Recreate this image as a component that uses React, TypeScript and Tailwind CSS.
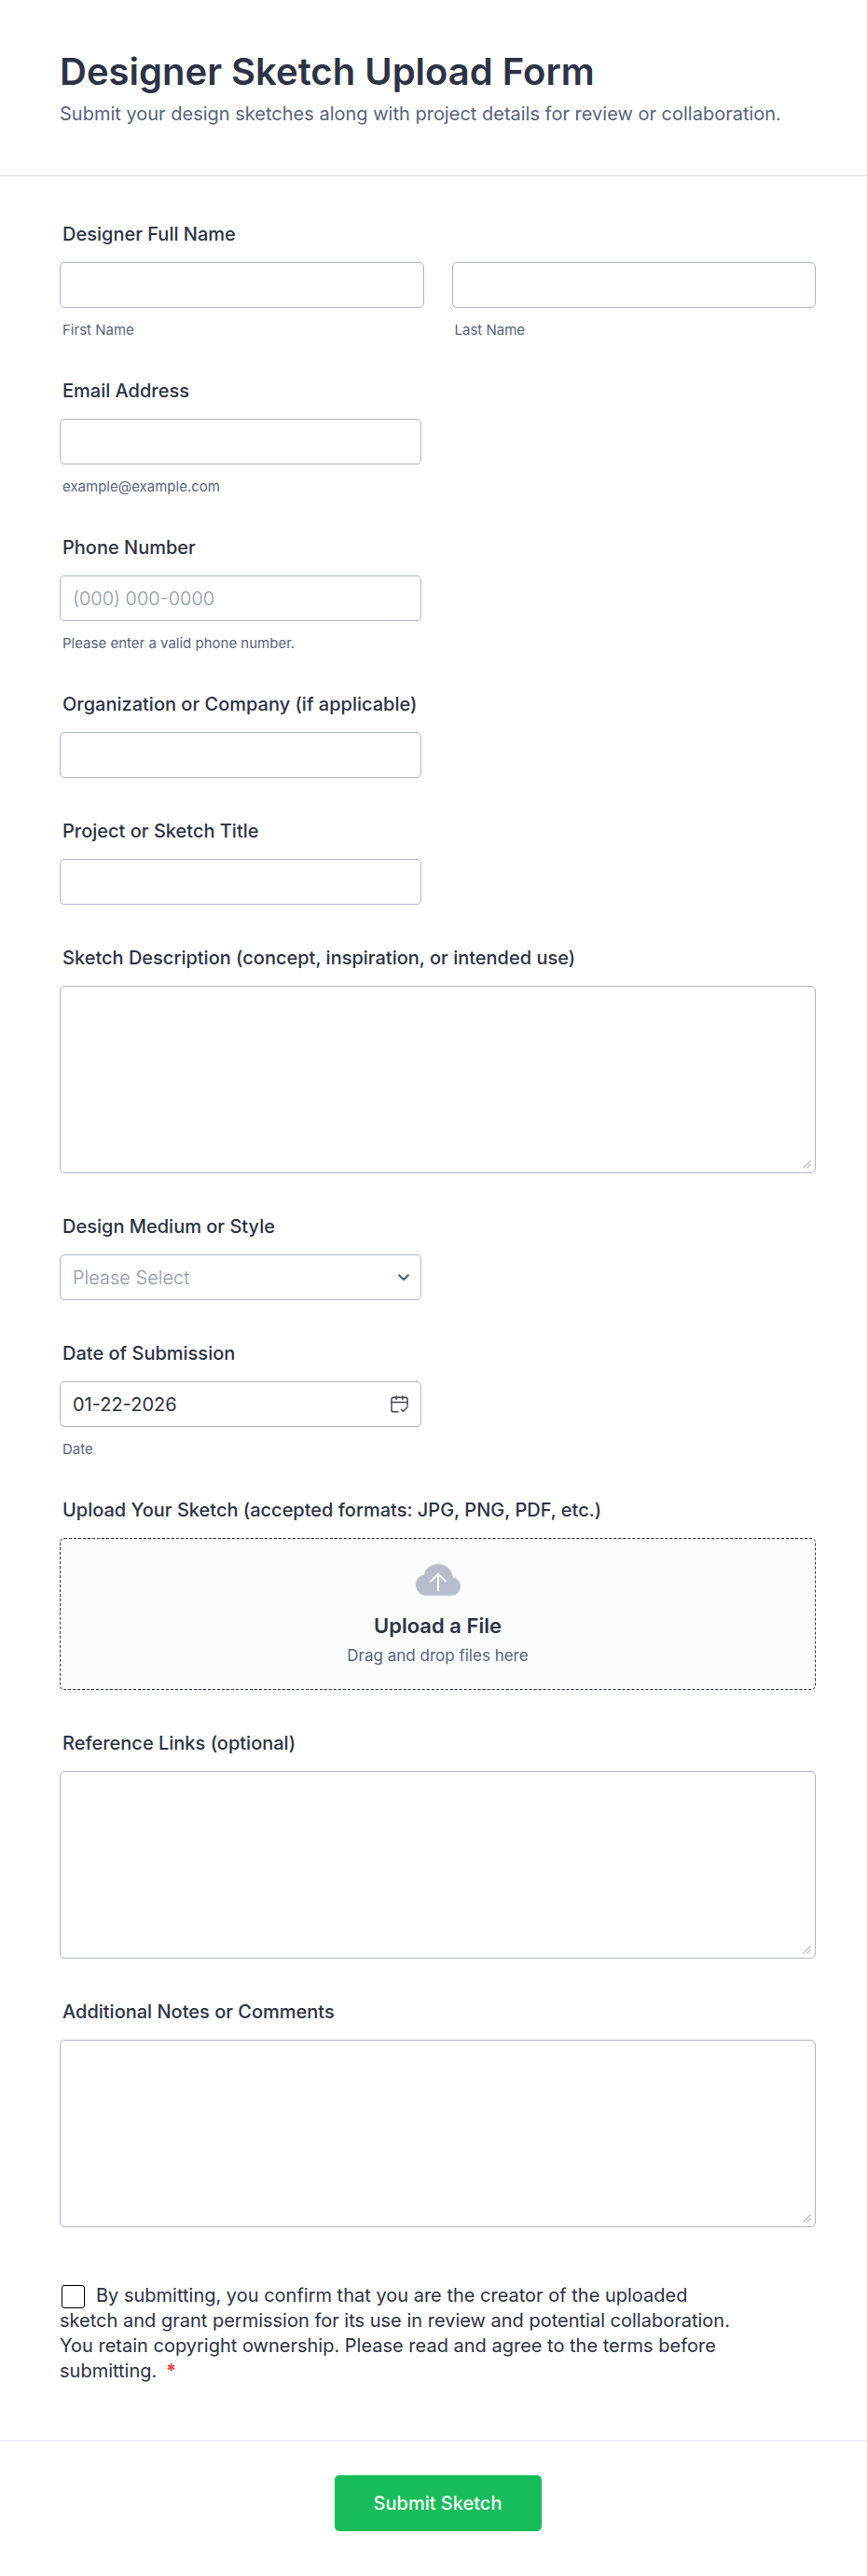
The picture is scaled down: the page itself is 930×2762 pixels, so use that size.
import type { ReactNode } from 'react';

const fieldClass = 'block h-[49px] rounded-[5px] border border-[#b0b6c8] bg-white px-[13px] text-xl text-[#2c3345] outline-none focus:border-[#2e69ff] placeholder:font-light placeholder:text-[#8d9aa8]';
const halfClass = 'w-[388px] max-w-full';

interface FieldProps {
    id: string;
    label: string;
    hint?: string;
    children: ReactNode;
}

function Field({ id, label, hint, children }: FieldProps) {
    return (
        <div>
            <label htmlFor={id} className="mb-[17px] block px-[3px] text-xl leading-[25px] font-medium">
                {label}
            </label>
            {children}
            {hint && <Hint>{hint}</Hint>}
        </div>
    );
}

function Hint({ children }: { children: ReactNode }) {
    return <p className="mt-[15px] px-[3px] text-[15px] leading-[17px] text-[#57647e]">{children}</p>;
}

function LongText({ id }: { id: string }) {
    return (
        <div className="relative">
            <textarea
                id={id}
                className="block h-[201px] w-full resize-none rounded-[5px] border border-[#b0b6c8] bg-white px-[13px] py-3 text-xl outline-none focus:border-[#2e69ff]"
            />
            {/* Resize grip */}
            <svg className="pointer-events-none absolute right-[5px] bottom-[5px] h-[9px] w-[9px]" viewBox="0 0 9 9" stroke="#b8bdcc" strokeWidth="1.2">
                <path d="M0.5 8.5 8.5 0.5M4.5 8.5 8.5 4.5" />
            </svg>
        </div>
    );
}

function CalendarIcon() {
    return (
        <svg viewBox="0 0 20 20" className="h-[19px] w-[19px]" fill="none" stroke="#4f4458" strokeWidth="1.6" strokeLinecap="round" strokeLinejoin="round">
            <path d="M8.5 18.7H3a2 2 0 0 1-2-2V4.500a2 2 0 0 1 2-2h14a2 2 0 0 1 2 2v7M1 7.800h18M6.500 1v3.600M13.500 1v3.600M12 16l2.200 2.200 4.800-4.700" />
        </svg>
    );
}

function CloudUploadIcon() {
    return (
        <svg viewBox="0 0 48 34" className="h-[34px] w-12">
            <path
                fill="#b8bdcc"
                d="M9 11.6C9.9 5 16 0 24 0s15 6 15.600 14.200A10 10 0 0 1 48 24c0 5.500-4.500 9.800-10 9.800H11C5 33.800 0 29 0 22.600 0 16.500 4 12.200 9 11.600Z"
            />
            <path d="M24 28.500V10.500M16 18.500 24 10.500l8 8" fill="none" stroke="#fff" strokeWidth="1.800" strokeLinecap="round" strokeLinejoin="round" />
        </svg>
    );
}

export default function App() {
    return (
        <form className="bg-white font-['Inter',sans-serif] text-[#2c3345]" onSubmit={(e) => e.preventDefault()}>
            <header className="border-b border-[#d7d8e1] px-16 pt-[52px] pb-[53px]">
                <h1 className="text-[40px] leading-[50px] font-semibold">Designer Sketch Upload Form</h1>
                <p className="mt-[7px] text-xl leading-[26px] text-[#57647e]">
                    Submit your design sketches along with project details for review or collaboration.
                </p>
            </header>

            <div className="flex flex-col gap-[45px] pt-[50px] pr-[55px] pb-[60px] pl-16">
                <fieldset>
                    <legend className="mb-[17px] px-[3px] text-xl leading-[25px] font-medium">Designer Full Name</legend>
                    <div className="grid grid-cols-2 gap-[30px]">
                        <label>
                            <input type="text" name="first" className={`${fieldClass} w-full`} />
                            <Hint>First Name</Hint>
                        </label>
                        <label>
                            <input type="text" name="last" className={`${fieldClass} w-full`} />
                            <Hint>Last Name</Hint>
                        </label>
                    </div>
                </fieldset>

                <Field id="email" label="Email Address" hint="example@example.com">
                    <input id="email" type="email" className={`${fieldClass} ${halfClass}`} />
                </Field>

                <Field id="phone" label="Phone Number" hint="Please enter a valid phone number.">
                    <input id="phone" type="tel" placeholder="(000) 000-0000" className={`${fieldClass} ${halfClass}`} />
                </Field>

                <Field id="company" label="Organization or Company (if applicable)">
                    <input id="company" type="text" className={`${fieldClass} ${halfClass}`} />
                </Field>

                <Field id="title" label="Project or Sketch Title">
                    <input id="title" type="text" className={`${fieldClass} ${halfClass}`} />
                </Field>

                <Field id="description" label="Sketch Description (concept, inspiration, or intended use)">
                    <LongText id="description" />
                </Field>

                <Field id="medium" label="Design Medium or Style">
                    <div className={`relative ${halfClass}`}>
                        <select
                            id="medium"
                            defaultValue=""
                            className="block h-[49px] w-full appearance-none rounded-[5px] border border-[#b0b6c8] bg-white px-[13px] text-xl font-light text-[#8d9aa8] outline-none focus:border-[#2e69ff]"
                        >
                            <option value="">Please Select</option>
                            <option>Pencil</option>
                            <option>Ink</option>
                            <option>Watercolor</option>
                            <option>Digital</option>
                        </select>
                        <svg viewBox="0 0 12 8" className="pointer-events-none absolute top-[21px] right-[13px] h-2 w-3" fill="none" stroke="#57647e" strokeWidth="2.4" strokeLinecap="round" strokeLinejoin="round">
                            <path d="M1.300 1.500 6 6l4.700-4.500" />
                        </svg>
                    </div>
                </Field>

                <Field id="date" label="Date of Submission" hint="Date">
                    <div className={`relative ${halfClass}`}>
                        <input id="date" type="text" defaultValue="01-22-2026" className={`${fieldClass} w-full`} />
                        <button type="button" aria-label="Choose date" className="absolute top-[15px] right-3.5">
                            <CalendarIcon />
                        </button>
                    </div>
                </Field>

                <Field id="sketch" label="Upload Your Sketch (accepted formats: JPG, PNG, PDF, etc.)">
                    <label
                        htmlFor="sketch"
                        className="flex h-[163px] cursor-pointer flex-col items-center rounded-[5px] border border-dashed border-[#2c3345] bg-[#fafcff] pt-[27px]"
                    >
                        <CloudUploadIcon />
                        <span className="mt-[18px] text-[22px] leading-7 font-semibold">Upload a File</span>
                        <span className="mt-1.5 text-[17px] leading-6 text-[#57647e]">Drag and drop files here</span>
                        <input id="sketch" type="file" className="sr-only" />
                    </label>
                </Field>

                <Field id="links" label="Reference Links (optional)">
                    <LongText id="links" />
                </Field>

                <Field id="notes" label="Additional Notes or Comments">
                    <LongText id="notes" />
                </Field>

                <div className="max-w-[730px] pt-[15px] text-xl leading-[27px]">
                    <input
                        id="terms"
                        type="checkbox"
                        required
                        className="mr-3 ml-0.5 inline-block h-[25px] w-[25px] appearance-none rounded-[3px] border border-black align-middle checked:bg-[#2e69ff]"
                    />
                    <label htmlFor="terms">
                        By submitting, you confirm that you are the creator of the uploaded sketch and grant permission for its use in
                        review and potential collaboration. You retain copyright ownership. Please read and agree to the terms before
                        submitting. <span className="ml-1 font-bold text-[#f23a3c]">*</span>
                    </label>
                </div>
            </div>

            <footer className="flex justify-center border-t-2 border-[#f3f3fe] pt-9 pr-[55px] pb-[50px] pl-16">
                <button type="submit" className="h-[60px] w-[222px] rounded-[5px] bg-[#18bd5b] text-xl font-medium text-white">
                    Submit Sketch
                </button>
            </footer>
        </form>
    );
}
